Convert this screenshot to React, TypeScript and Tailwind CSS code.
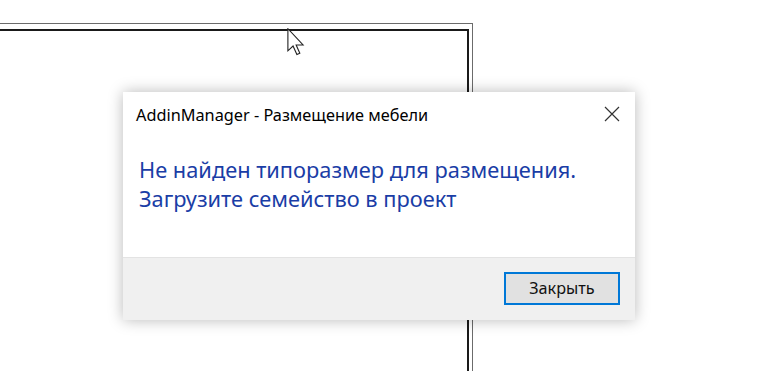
import React from "react";

export default function App() {
  const font = { fontFamily: '"Noto Sans", "Open Sans", Arial, sans-serif' };
  return (
    <div className="relative w-[768px] h-[371px] bg-white overflow-hidden" style={font}>
      {/* background window frame */}
      <div className="absolute left-0 top-[23px] w-[473px] h-[360px] border-t border-r border-[#6b6b6b]" />
      <div className="absolute left-0 top-[29px] w-[469px] h-[360px] border-t-2 border-r-2 border-[#1a1a1a]" />

      {/* cursor */}
      <svg className="absolute left-[286px] top-[28px]" width="20" height="28" viewBox="0 0 12 19">
        <path
          d="M0.5 0.5 L0.5 15.5 L4 12.2 L6.6 18 L8.6 17.1 L6.1 11.5 L10.8 11.5 Z"
          fill="white"
          stroke="#222"
          strokeWidth="0.75"
          strokeLinejoin="miter"
        />
      </svg>

      {/* dialog */}
      <div className="absolute left-[123px] top-[92px] w-[512px] h-[228px] bg-white flex flex-col shadow-[0_0_14px_rgba(0,0,0,0.28)]">
        <div className="h-[45px] flex items-center justify-between pl-[13px] pr-[15px] pt-[1px]">
          <span className="text-[16.3px] text-black leading-none">AddinManager - Размещение мебели</span>
          <svg width="16" height="16" viewBox="0 0 16 16" className="mt-[-2px]">
            <path d="M1 1 L15 15 M15 1 L1 15" stroke="#333" strokeWidth="1.2" />
          </svg>
        </div>
        <div className="flex-1 pl-[16px] pt-[18px] text-[21.8px] leading-[29px] text-[#1a3da6]">
          <div>Не найден типоразмер для размещения.</div>
          <div>Загрузите семейство в проект</div>
        </div>
        <div className="h-[63px] bg-[#f0f0f0] border-t border-[#e3e3e3] flex items-start justify-end pt-[14px] pr-[15px]">
          <button className="w-[116px] h-[33px] bg-[#e1e1e1] border-2 border-[#0078d7] text-[16.2px] text-[#111] flex items-center justify-center">
            Закрыть
          </button>
        </div>
      </div>
    </div>
  );
}
